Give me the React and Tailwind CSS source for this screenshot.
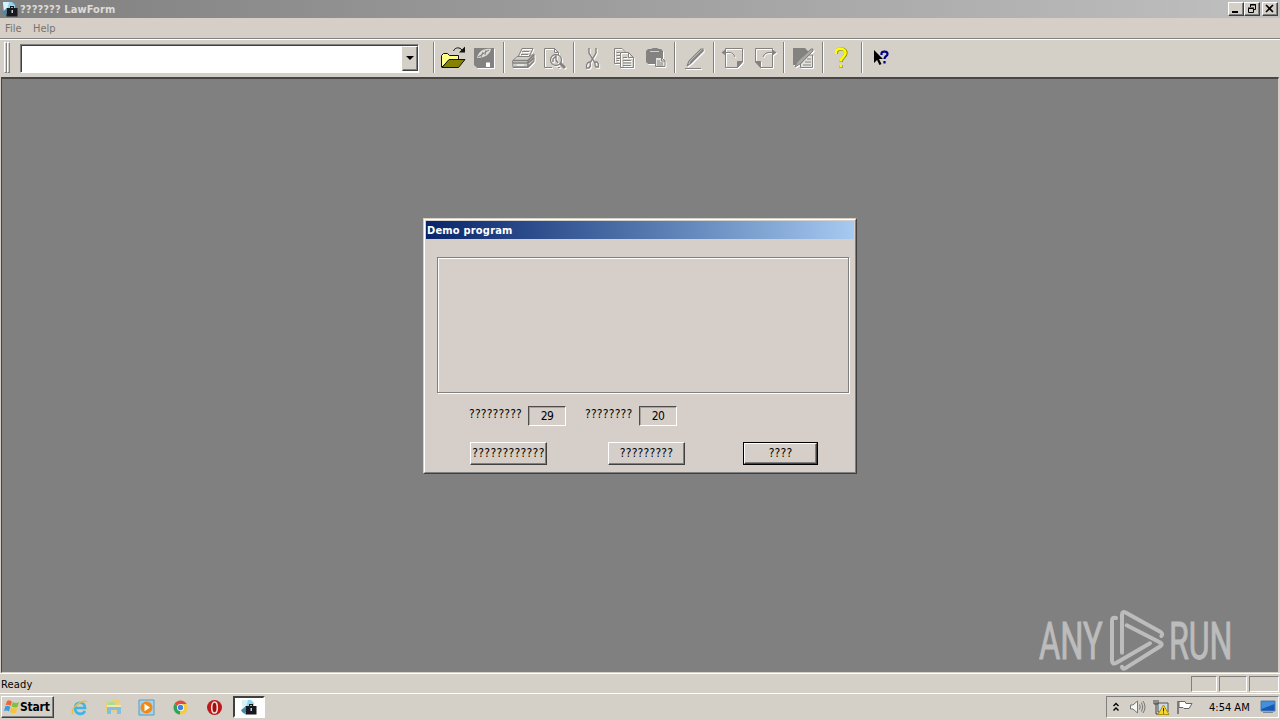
const Separator = () => (
  <div className="mx-[3px] h-[31px] w-0.5 shrink-0 border-l border-r border-l-[#808080] border-r-white" />
);

const ToolButton = ({ children, disabled }) => (
  <button className="mt-px h-[31px] w-[31px] shrink-0">
    <svg
      viewBox="0 0 31 31"
      fill="none"
      className={
        disabled
          ? "h-[31px] w-[31px] text-[#848280] drop-shadow-[1px_1px_0_#ffffff]"
          : "h-[31px] w-[31px]"
      }
    >
      {children}
    </svg>
  </button>
);

const OpenIcon = () => (
  <ToolButton>
    <path d="M3.5 24V12.5L5.5 10.5H9.5L11.5 12.5H20.5V17H11L4 24Z" fill="#ffff84" stroke="#111" />
    <path d="M4 24.5L11 16.5H27L20.5 24.5Z" fill="#848200" stroke="#111" />
    <path d="M15.5 8C17 4 22 4 24 7" stroke="#111" />
    <path d="M21 9.5H27V3.5Z" fill="#111" />
  </ToolButton>
);

const SaveIcon = () => (
  <ToolButton disabled>
    <path d="M5 5H25V25H8L5 22Z" fill="currentColor" />
    <path d="M8 15C9 9 14 5 22 6C21 11 16 15 8 15Z" fill="#dedbd5" />
    <path d="M9 14L20 7M12 14L14 9M16 12L17 7" stroke="currentColor" />
    <path d="M17 19.5H21V24H17Z" fill="#fff" />
  </ToolButton>
);

const PrintIcon = () => (
  <ToolButton disabled>
    <path d="M10 14L14 5.5H25L21 14M14 8.5H21M13 11.5H20" stroke="currentColor" />
    <path d="M4.5 18L9 13.5H21L26 11V18L20 24.5H5Z" fill="#d4d0c8" stroke="currentColor" />
    <path d="M5 17.5H20L26 12M5 20H20L26 15M6 24H20L26 18M20 17V24" stroke="currentColor" strokeWidth="1.7" />
    <path d="M9 22H16" stroke="#fff" />
  </ToolButton>
);

const PreviewIcon = () => (
  <ToolButton disabled>
    <path d="M13 24.5H5.5V5.5H15.5L19.5 9.5V12M15.5 5.5V9.5H19.5M19 24.5H21" stroke="currentColor" />
    <circle cx="17" cy="17" r="5.5" stroke="currentColor" strokeWidth="1.3" />
    <path d="M14 19V16L17 13V17L19 20" stroke="currentColor" strokeWidth="1.4" />
    <path d="M21 20L26 25" stroke="currentColor" strokeWidth="3" />
  </ToolButton>
);

const CutIcon = () => (
  <ToolButton disabled>
    <path d="M11 5V10L17 20M18 5V10L12 20" stroke="currentColor" strokeWidth="1.4" />
    <path d="M12 19L10 19.5L8.5 22V25H11L12.5 23ZM17 19H19L20.5 21V24H18L17 22Z" stroke="currentColor" strokeWidth="1.3" />
  </ToolButton>
);

const CopyIcon = () => (
  <ToolButton disabled>
    <path d="M11 20.5H5.5V5.5H13L17.5 10" stroke="currentColor" />
    <path d="M7.5 9.5H11M7.5 12.5H11M7.5 15.5H11M7.5 17.5H10" stroke="currentColor" />
    <path d="M11.5 9.5H19.5L24.5 14.5V24.5H11.5ZM19.5 9.5V14.5H24.5" stroke="currentColor" />
    <path d="M14 14.5H18M14 17.5H22M14 20H22M14 22.5H22" stroke="currentColor" />
  </ToolButton>
);

const PasteIcon = () => (
  <ToolButton disabled>
    <path d="M6 8L8 6H11L13 5H17L19 6H21L23 8V15H15V21H8L6 19Z" fill="currentColor" />
    <path d="M10 8.5H19" stroke="#d4d0c8" />
    <path d="M15.5 14.5H21.5L25 18V23.5H15.5Z" fill="#e4e1dc" stroke="currentColor" />
    <path d="M17 18H20M17 20H23M17 22H23M21.5 15V18H25" stroke="currentColor" />
  </ToolButton>
);

const PenIcon = () => (
  <ToolButton disabled>
    <path d="M8 23L10 18L22 6H24V8L12 20L8 23" stroke="currentColor" strokeWidth="1.2" />
    <path d="M11 20L24 7" stroke="currentColor" strokeWidth="2" />
    <path d="M6 25.5H22" stroke="currentColor" />
  </ToolButton>
);

const PageBackIcon = () => (
  <ToolButton disabled>
    <path d="M7.5 11V24.5H19.5L24.5 19V5.5H7.5V7" stroke="currentColor" />
    <path d="M19.5 24.5V18.5H24.5Z" fill="currentColor" stroke="currentColor" />
    <path d="M7 9.5H11C14 9.5 16 11 17 14" stroke="currentColor" />
    <path d="M3.5 9.5L8 6V13Z" fill="currentColor" />
  </ToolButton>
);

const PageForwardIcon = () => (
  <ToolButton disabled>
    <path d="M23.5 11V24.5H11.5L6.5 19V5.5H23.5V7" stroke="currentColor" />
    <path d="M11.5 24.5V18.5H6.5Z" fill="currentColor" stroke="currentColor" />
    <path d="M24 9.5H20C17 9.5 15 11 14 14" stroke="currentColor" />
    <path d="M27.5 9.5L23 6V13Z" fill="currentColor" />
  </ToolButton>
);

const EditPageIcon = () => (
  <ToolButton disabled>
    <path d="M5 5H17L20 8V12L9 22H5Z" fill="currentColor" />
    <path d="M12.5 24.5V21L21 12H24.5V24.5Z" fill="#e4e1dc" stroke="currentColor" />
    <path d="M19 16H23M17 19H23M15 22H23" stroke="currentColor" />
    <path d="M7 24L9 19L23 6H25V8L12 21Z" fill="#aaa8a3" stroke="currentColor" />
  </ToolButton>
);

const HelpIcon = () => (
  <ToolButton>
    <path d="M9.5 11V9C10 6 12 6 14 6C18 6 19 8 19 10C19 14 14 14 14 19M14 22V25" stroke="#848200" strokeWidth="3.2" />
    <path d="M9 11V9C9 6 11.5 5.7 14 5.7C17 5.7 18.5 8 18.5 10C18.5 14 13.7 14 13.7 18.5M13.7 21.5V24.5" stroke="#ffff00" strokeWidth="2.5" />
  </ToolButton>
);

const ContextHelpIcon = () => (
  <ToolButton>
    <path d="M8 7V20L11 17L13.5 22L15.5 21L13 16H17Z" fill="#000" />
    <path d="M15.5 12V10C16 8.2 21.5 8 21.5 11C21.5 13.5 18.5 13 18.5 16M18.5 18V20.5" stroke="#000084" strokeWidth="2.2" />
  </ToolButton>
);

// Program icon, shown in the title bar and in the taskbar
const AppIcon = () => (
  <svg viewBox="0 0 16 16" className="h-4 w-4 shrink-0">
    <path d="M1 1H10L13 4V13H3Z" fill="#8fd5ee" />
    <path d="M1 1H7L5 9L2 13Z" fill="#d5f1fa" />
    <path d="M0 11L4 8V15L1 13Z" fill="#4b89aa" />
    <path d="M8 7V5H12V7H15.5V15.5H4.5V7Z" fill="#17191f" />
    <path d="M9 6H11V7H9Z" fill="#9eb4be" />
    <path d="M9.5 9H11V12H9.5Z" fill="#cbd0d6" />
  </svg>
);

const CaptionButton = ({ children }) => (
  <button className="h-[14px] w-4 border border-t-white border-l-white border-r-[#404040] border-b-[#404040] bg-[#d4d0c8] shadow-[inset_-1px_-1px_0_#808080]">
    <svg viewBox="0 0 14 12" className="h-3 w-3.5" fill="none" stroke="#000">
      {children}
    </svg>
  </button>
);

const TitleBar = () => (
  <div className="flex h-[18px] items-center bg-linear-to-r from-[#808080] to-[#c0c0c0] pr-0.5 pl-0.5">
    <AppIcon />
    <span className="ml-0.5 grow text-[11px] font-bold tracking-[0.08px] text-[#dedbd5]">
      ??????? LawForm
    </span>
    <CaptionButton>
      <path d="M3 9H9" strokeWidth="2" />
    </CaptionButton>
    <CaptionButton>
      <path d="M5.5 4V1.5H10.5V6.5H8.5M5 2H11" />
      <path d="M3.5 5.5H8.5V9.5H3.5ZM3 5H9" />
    </CaptionButton>
    <div className="w-0.5" />
    <CaptionButton>
      <path d="M3 2L10 9M10 2L3 9" strokeWidth="1.6" />
    </CaptionButton>
  </div>
);

const Toolbar = () => (
  <div className="flex h-[37px] items-start pt-0.5 pl-1">
    <div className="h-[31px] w-[3px] border border-t-white border-r-[#808080] border-b-[#808080] border-l-white" />
    <div className="h-[31px] w-[3px] border border-t-white border-r-[#808080] border-b-[#808080] border-l-white" />
    <div className="mt-0.5 mr-[11px] ml-2.5 flex h-[29px] w-[399px] border border-t-[#808080] border-r-white border-b-white border-l-[#808080] bg-white pt-px pl-px shadow-[inset_1px_1px_0_#404040]">
      <div className="grow" />
      <button className="mb-px flex w-4 items-center justify-center border border-t-white border-r-[#404040] border-b-[#404040] border-l-[#d4d0c8] bg-[#d4d0c8] shadow-[inset_-1px_-1px_0_#808080]">
        <svg viewBox="0 0 8 5" className="h-[5px] w-2">
          <path d="M0 0H8L4 4Z" />
        </svg>
      </button>
    </div>
    <div className="flex items-start">
      <Separator />
      <OpenIcon />
      <SaveIcon />
      <Separator />
      <PrintIcon />
      <PreviewIcon />
      <Separator />
      <CutIcon />
      <CopyIcon />
      <PasteIcon />
      <Separator />
      <PenIcon />
      <Separator />
      <PageBackIcon />
      <PageForwardIcon />
      <Separator />
      <EditPageIcon />
      <Separator />
      <HelpIcon />
      <Separator />
      <ContextHelpIcon />
    </div>
  </div>
);

const Counter = ({ value }) => (
  <div className="flex h-5 w-[38px] items-center justify-center border border-t-[#504d4a] border-r-white border-b-white border-l-[#504d4a] text-[12px] tracking-[-0.6px] shadow-[inset_1px_1px_0_#a8a29c]">
    {value}
  </div>
);

const DialogButton = ({ label, className }) => (
  <button
    className={`flex items-center justify-center overflow-hidden border border-t-white border-r-[#404040] border-b-[#404040] border-l-white pb-px whitespace-nowrap shadow-[inset_-1px_-1px_0_#808080] ${className}`}
  >
    {label}
  </button>
);

const DemoDialog = () => (
  <div className="absolute top-[218px] left-[423px] h-[256px] w-[434px] border border-t-[#d4d0c8] border-r-[#404040] border-b-[#404040] border-l-[#d4d0c8] bg-[#d6cfc9]">
    <div className="flex h-full flex-col border border-t-white border-r-[#808080] border-b-[#808080] border-l-white p-px text-[12px]">
      <div className="flex h-[18px] shrink-0 items-center bg-linear-to-r from-[#0a246a] to-[#a6caf0] pl-px text-[11px] font-bold tracking-[0.2px] text-white">
        Demo program
      </div>
      <div className="mt-[18px] ml-[11px] h-[136px] w-[412px] shrink-0 border border-[#808080] shadow-[1px_1px_0_#fff,inset_1px_1px_0_#fff]" />
      <div className="mt-[13px] ml-[43px] flex h-5 shrink-0">
        <span className="w-[59px] pt-0.5 tracking-[0.15px]">?????????</span>
        <Counter value="29" />
        <span className="ml-[19px] w-[54px] pt-0.5 tracking-[0.2px]">????????</span>
        <Counter value="20" />
      </div>
      <div className="mt-4 ml-11 flex h-[23px] shrink-0">
        <DialogButton label="????????????" className="h-[23px] w-[77px] tracking-[0.3px]" />
        <DialogButton label="?????????" className="ml-[61px] h-[23px] w-[77px] tracking-[0.2px]" />
        <div className="ml-[58px] border border-black">
          <DialogButton label="????" className="h-[21px] w-[73px] tracking-[0.2px]" />
        </div>
      </div>
    </div>
  </div>
);

const Watermark = () => (
  <svg
    viewBox="0 0 690 240"
    className="absolute top-[600px] left-[1020px] h-20 w-[230px] overflow-visible"
    fill="none"
  >
    <g
      fill="#bcbcbc"
      stroke="#bcbcbc"
      strokeWidth="3"
      fontFamily="Roboto, sans-serif"
      fontSize="153"
    >
      <text transform="translate(57 178) scale(0.64 1)">ANY</text>
      <text transform="translate(447 178) scale(0.63 1)">RUN</text>
    </g>
    <g stroke="#bcbcbc" strokeWidth="12" strokeLinecap="round" strokeLinejoin="round">
      <path d="M288 54Q276 50 276 62V182Q276 194 288 189L390 130" />
      <path d="M306 158V44Q306 32 318 38L422 96Q430 103 424 108" />
      <path d="M320 76L422 128Q428 133 422 138L320 202Q308 211 306 200" />
    </g>
  </svg>
);

const StatusBar = () => (
  <div className="flex h-5 items-center border-t border-t-white bg-[#d4d0c8] pl-px text-[11px]">
    <span className="grow pt-px tracking-[0.15px]">Ready</span>
    <div className="mr-0.5 h-4 w-[26px] border border-t-[#808080] border-r-white border-b-white border-l-[#808080]" />
    <div className="mr-0.5 h-4 w-7 border border-t-[#808080] border-r-white border-b-white border-l-[#808080]" />
    <div className="mr-px h-4 w-[30px] border border-t-[#808080] border-r-white border-b-white border-l-[#808080]" />
  </div>
);

const QuickLaunch = () => (
  <div className="ml-[17px] flex items-center gap-[16.7px]">
    <svg viewBox="0 0 17 17" className="h-[17px] w-[17px]" fill="none">
      <path d="M14 12C11 17 4 15 4 9C4 2 14 2 14 9H5" stroke="#42b4e4" strokeWidth="2.7" />
      <path d="M2 15C-2 10 12-1 16 3" stroke="#e8bd43" strokeWidth="1.4" />
    </svg>
    <svg viewBox="0 0 17 17" className="h-[17px] w-[17px]">
      <path d="M1 2H6L7 1H14V13H1Z" fill="#f0cf70" />
      <path d="M3 3H10V7H3Z" fill="#a9dc9d" />
      <path d="M2 8H16V15H12V11H6V15H2Z" fill="#7fc0e3" />
      <path d="M2 6H16V8H2Z" fill="#f6e6a4" />
    </svg>
    <svg viewBox="0 0 17 17" className="h-[17px] w-[17px]">
      <path d="M1 1H16V16H1Z" fill="#a5d3ee" stroke="#5b9bc4" />
      <circle cx="8.5" cy="8.5" r="6" fill="#f08a16" />
      <path d="M6.5 4.8L12 8.5L6.5 12.2Z" fill="#fff" />
    </svg>
    <svg viewBox="0 0 17 17" className="h-[17px] w-[17px]">
      <path d="M8.5 8.5L2.4 5A7 7 0 0 1 14.6 5Z" fill="#df4b3d" />
      <path d="M8.5 8.5L2.4 5A7 7 0 0 0 8 15.5Z" fill="#2fa457" />
      <path d="M8.5 8.5L8 15.5A7 7 0 0 0 14.6 5H8.5Z" fill="#f5cc3b" />
      <circle cx="8.5" cy="8.5" r="3.5" fill="#fff" />
      <circle cx="8.5" cy="8.5" r="2.7" fill="#4381df" />
    </svg>
    <svg viewBox="0 0 17 17" className="h-[17px] w-[17px]">
      <circle cx="8.5" cy="8.5" r="7.5" fill="#bd1919" />
      <ellipse cx="8.5" cy="8.5" rx="2.8" ry="5.5" fill="#a00e0e" stroke="#f5dede" strokeWidth="1.6" />
    </svg>
  </div>
);

const Tray = () => (
  <div className="mr-px flex h-[22px] w-[173px] items-center border border-t-[#808080] border-r-white border-b-white border-l-[#808080] pl-[5px]">
    <svg viewBox="0 0 8 10" className="h-2.5 w-2" fill="none" stroke="#000" strokeWidth="1.4">
      <path d="M1.5 4L4 1.5L6.5 4M1.5 8.5L4 6L6.5 8.5" />
    </svg>
    <svg viewBox="0 0 17 16" className="ml-[9px] h-4 w-[17px]" fill="none" stroke="#777">
      <path d="M1.5 6H4L8.5 2V14L4 10H1.5Z" fill="#f6f6f4" />
      <path d="M10.5 5.5Q12 8 10.5 10.5M12.5 3.5Q15 8 12.5 12.5M14 2Q18 8 14 14" />
    </svg>
    <svg viewBox="0 0 17 17" className="ml-[7px] h-[17px] w-[17px]">
      <path d="M5 4H15V13H5Z" fill="#c9dbe7" stroke="#555" />
      <path d="M1 1V5H5V1M3 1V5M3 5V15H7" fill="none" stroke="#444" />
      <path d="M10.5 6L16 15.5H5Z" fill="#f5d72e" stroke="#b38f10" />
      <path d="M10.5 9V12.5M10.5 13.5V14.5" stroke="#222" />
    </svg>
    <svg viewBox="0 0 17 16" className="ml-[6px] h-4 w-[17px]" fill="#fff" stroke="#666">
      <path d="M2 2V15" strokeWidth="1.5" />
      <path d="M3 2.5H9L10 4.5H16L13 9.5H8L7 8.5H3Z" />
    </svg>
    <span className="ml-4 w-[50px] text-[11px] whitespace-nowrap">4:54 AM</span>
    <svg viewBox="0 0 16 14" className="ml-px h-3.5 w-4">
      <path d="M1 1H15V11H1Z" fill="#1559b7" stroke="#5a7fa8" />
      <path d="M1.5 1.5H14.5V4L1.5 9Z" fill="#428fdd" />
      <path d="M3 12H13V13H3Z" fill="#778795" />
    </svg>
  </div>
);

const Taskbar = () => (
  <div className="flex h-[27px] items-center border-t border-t-white bg-[#d4d0c8] pl-px">
    <button className="flex h-[22px] w-[53px] items-center border border-t-white border-r-[#404040] border-b-[#404040] border-l-white pl-0.5 text-[12px] font-bold tracking-[-0.2px] shadow-[inset_-1px_-1px_0_#808080]">
      <svg viewBox="0 0 16 16" className="h-4 w-4 shrink-0">
        <path d="M3 2Q6 0 8 3L6.5 7Q4 5 1.5 6.5Z" fill="#ec6733" />
        <path d="M9 3Q12 5 15 3L13.5 8Q11 9 7.5 7.5Z" fill="#83bd41" />
        <path d="M1.2 7.5Q4 6 6.3 8L5 12.5Q3 11 0 12Z" fill="#3f99dc" />
        <path d="M7.3 8.5Q10 10 13.2 9L12 13.5Q9 15 6 13Z" fill="#f7c62e" />
      </svg>
      Start
    </button>
    <QuickLaunch />
    <button className="ml-[10px] flex h-[22px] w-8 items-center justify-center border-2 border-t-[#404040] border-r-white border-b-white border-l-[#404040] bg-white">
      <AppIcon />
    </button>
    <div className="grow" />
    <Tray />
  </div>
);

const App = () => {
  return (
    <div className="relative flex h-[720px] w-[1280px] flex-col overflow-hidden bg-[#d4d0c8] font-['DejaVu_Sans_Condensed','DejaVu_Sans',sans-serif] leading-none text-black">
      <TitleBar />
      <div className="flex h-5 items-center bg-[#d6cfc8] pl-[5px] text-[11px] text-[#77736f]">
        <span className="w-7">File</span>
        <span>Help</span>
      </div>
      <div className="h-0.5 border-t border-b border-t-[#808080] border-b-white" />
      <Toolbar />
      <div className="mr-px ml-px grow border-t-2 border-r border-b border-l border-t-[#484644] border-r-[#d4d0c8] border-b-[#d4d0c8] border-l-[#484644] bg-[#808080]" />
      <StatusBar />
      <Taskbar />

      <DemoDialog />
      <Watermark />
    </div>
  );
};

export default App;
